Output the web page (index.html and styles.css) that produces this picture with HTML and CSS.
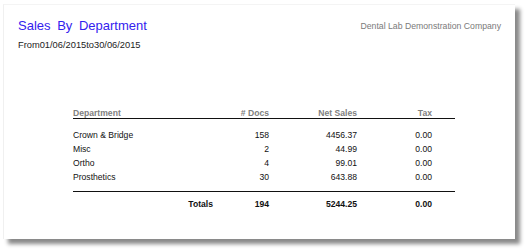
FILE: index.html
```html
<!DOCTYPE html>
<html>
<head>
<meta charset="utf-8">
<link rel="stylesheet" href="styles.css">
</head>
<body>
<div class="paper">
  <header class="head">
    <div class="titles">
      <h1 class="title">Sales By Department</h1>
      <div class="range">From01/06/2015to30/06/2015</div>
    </div>
    <div class="company">Dental Lab Demonstration Company</div>
  </header>
  <table class="report">
    <colgroup>
      <col class="w-a"><col class="w-b"><col class="w-c"><col class="w-d"><col class="w-e">
    </colgroup>
    <thead>
      <tr><th colspan="2">Department</th><th class="num"># Docs</th><th class="num">Net Sales</th><th class="num tax">Tax</th></tr>
    </thead>
    <tbody>
      <tr class="first"><td colspan="2">Crown &amp; Bridge</td><td class="num">158</td><td class="num">4456.37</td><td class="num tax">0.00</td></tr>
      <tr><td colspan="2">Misc</td><td class="num">2</td><td class="num">44.99</td><td class="num tax">0.00</td></tr>
      <tr><td colspan="2">Ortho</td><td class="num">4</td><td class="num">99.01</td><td class="num tax">0.00</td></tr>
      <tr class="last"><td colspan="2">Prosthetics</td><td class="num">30</td><td class="num">643.88</td><td class="num tax">0.00</td></tr>
    </tbody>
    <tfoot>
      <tr><td></td><td class="num">Totals</td><td class="num">194</td><td class="num">5244.25</td><td class="num tax">0.00</td></tr>
    </tfoot>
  </table>
</div>
</body>
</html>
```
FILE: styles.css
```css
html, body { margin: 0; padding: 0; }
body {
  background: #fff;
  width: 527px;
  height: 251px;
  overflow: hidden;
  font-family: "Liberation Sans", Arial, sans-serif;
  padding: 4px 0 0 3px;
  box-sizing: border-box;
}
.paper {
  width: 512px;
  height: 235px;
  background: #fff;
  border-left: 1px solid #f0f0f0;
  border-top: 1px solid #f4f4f4;
  box-sizing: border-box;
  box-shadow: 5px 5px 4px #8a8a8a;
  padding: 0 14px 0 14px;
}
.head {
  display: flex;
  justify-content: space-between;
  align-items: flex-start;
}
.title {
  margin: 13px 0 0 0;
  font-weight: normal;
  font-size: 13px;
  line-height: 16px;
  color: #3322ee;
  word-spacing: 3px;
}
.range {
  margin-top: 6px;
  font-size: 9.3px;
  line-height: 10px;
  color: #222;
}
.company {
  margin-top: 16px;
  font-size: 8.7px;
  color: #7a7a7a;
}
.report {
  margin: 58px 0 0 55px;
  border-collapse: collapse;
  table-layout: fixed;
  width: 382px;
  font-size: 8.6px;
  color: #111;
}
.w-a { width: 67px; }
.w-b { width: 73px; }
.w-c { width: 56px; }
.w-d { width: 88px; }
.w-e { width: 98px; }
.report th, .report td { padding: 0; white-space: nowrap; }
.report th {
  font-weight: bold;
  color: #808080;
  height: 10px;
  line-height: 10px;
  vertical-align: top;
  border-bottom: 1px solid #111;
  text-align: left;
}
.report .num { text-align: right; }
.report .tax { padding-right: 23px; }
.report tbody td { height: 14px; line-height: 14px; }
.report tbody tr.first td { padding-top: 9px; }
.report tbody tr.last td { padding-bottom: 7px; border-bottom: 1px solid #111; }
.report tfoot td { font-weight: bold; height: 14px; padding-top: 5px; }
```
